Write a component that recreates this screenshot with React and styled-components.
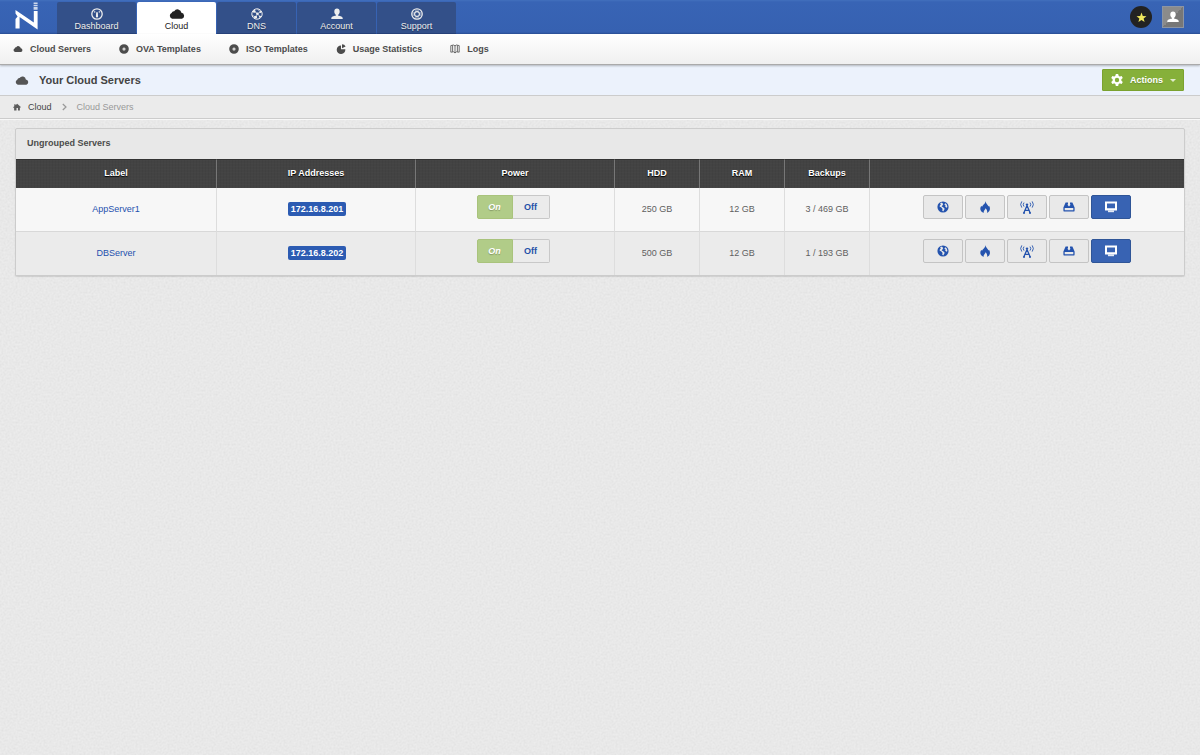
import React from 'react';
import styled, { createGlobalStyle, css } from 'styled-components';

const grain = `url("data:image/svg+xml,%3Csvg xmlns='http://www.w3.org/2000/svg' width='240' height='240'%3E%3Cfilter id='n' x='0' y='0' width='100%25' height='100%25'%3E%3CfeTurbulence type='fractalNoise' baseFrequency='0.5' numOctaves='3' stitchTiles='stitch'/%3E%3CfeColorMatrix values='1 0 0 0 0 1 0 0 0 0 1 0 0 0 0 0 0 0 0 1'/%3E%3C/filter%3E%3Crect width='240' height='240' filter='url(%23n)' opacity='0.09'/%3E%3C/svg%3E")`;

const weave = `repeating-linear-gradient(90deg, rgba(0, 0, 0, 0.04) 0 1px, transparent 1px 3px),
  repeating-linear-gradient(0deg, rgba(255, 255, 255, 0.01) 0 1px, transparent 1px 3px)`;

const GlobalStyle = createGlobalStyle`
  *, *::before, *::after {
    box-sizing: border-box;
  }

  body {
    margin: 0;
    min-height: 100vh;
    background: #ececec ${grain};
    color: #444;
    font: 9px/12px "Liberation Sans", Arial, sans-serif;
  }

  a {
    text-decoration: none;
  }

  button {
    margin: 0;
    padding: 0;
    font: inherit;
    cursor: pointer;
  }

  svg {
    display: block;
    flex: none;
  }
`;

const TopBar = styled.header`
  display: flex;
  align-items: stretch;
  height: 34px;
  padding-right: 16px;
  background: linear-gradient(#4270bd 0, #3864b5 2px, #3661b1 32px, #2a5096 100%);
`;

const Logo = styled.a`
  width: 57px;
  padding: 2px 0 0 15px;
`;

const Tabs = styled.nav`
  display: flex;
  gap: 1px;
  padding-top: 2px;
`;

const Tab = styled.a`
  display: flex;
  flex-direction: column;
  align-items: center;
  width: 79px;
  padding-top: 5px;
  border-radius: 2px 2px 0 0;
  background: #335089;
  box-shadow: inset 0 -1px #27437b;
  color: #eee;
  text-shadow: 0 1px 1px rgba(0, 0, 0, 0.4);

  ${props =>
    props.$active &&
    css`
      background: #fff;
      box-shadow: none;
      color: #222;
      text-shadow: none;
    `}
`;

const TabIcon = styled.span`
  display: flex;
  align-items: center;
  justify-content: center;
  height: 13px;
`;

const UserArea = styled.div`
  display: flex;
  align-items: center;
  gap: 10px;
  margin-left: auto;
`;

const StarButton = styled.button`
  display: flex;
  align-items: center;
  justify-content: center;
  width: 22px;
  height: 22px;
  border: 0;
  border-radius: 50%;
  background: #222;
  color: #f0e85e;
`;

const AvatarButton = styled.button`
  display: flex;
  align-items: center;
  justify-content: center;
  width: 22px;
  height: 22px;
  border: 1px solid #8d95a3;
  background: linear-gradient(135deg, #8b8b8b 50%, #777 50%);
  color: #fff;
`;

const SubNav = styled.nav`
  display: flex;
  align-items: center;
  gap: 28px;
  height: 31px;
  padding: 0 13px;
  border-bottom: 1px solid #aaa;
  background: linear-gradient(#fff, #f0f0f0);
  box-shadow: 0 1px 2px rgba(0, 0, 0, 0.25);
  position: relative;
`;

const SubLink = styled.a`
  display: flex;
  align-items: center;
  gap: 7px;
  color: #4c4c4c;
  font-weight: bold;
`;

const TitleBar = styled.div`
  display: flex;
  align-items: center;
  gap: 10px;
  height: 31px;
  padding: 0 16px 0 15px;
  border-bottom: 1px solid #ccc;
  background: #ecf2fc;
  color: #555;
`;

const Title = styled.h1`
  margin: 0;
  color: #444;
  font-size: 11px;
  line-height: 14px;
`;

const ActionsButton = styled.button`
  display: flex;
  align-items: center;
  gap: 7px;
  height: 22px;
  margin-left: auto;
  padding: 0 7px 0 8px;
  border: 1px solid #7ba22f;
  border-radius: 1px;
  background: #86b03a;
  color: #fff;
  font-weight: bold;
  text-shadow: 0 1px 1px rgba(0, 0, 0, 0.2);
`;

const Breadcrumbs = styled.nav`
  display: flex;
  align-items: center;
  gap: 10px;
  height: 23px;
  padding: 0 13px;
  border-bottom: 1px solid #ccc;
  background: #ebebeb;
  box-shadow: 0 1px #f8f8f8;
  color: #999;
`;

const Crumb = styled.a`
  display: flex;
  align-items: center;
  gap: 7px;
  color: #444;
`;

const Panel = styled.section`
  margin: 9px 15px;
  border: 1px solid #ccc;
  border-radius: 2px;
  background: #e8e8e8;
  box-shadow: 0 1px 1px rgba(0, 0, 0, 0.12);
`;

const PanelTitle = styled.h2`
  margin: 0;
  padding: 8px 11px 10px;
  color: #4c4c4c;
  font-size: 9px;
  line-height: 12px;
`;

const Table = styled.table`
  width: 100%;
  table-layout: fixed;
  border-spacing: 0;
`;

const columnWidths = {
  label: '201px',
  wide: '199px',
  narrow: '85px',
  rest: 'auto',
};

const Col = styled.col`
  width: ${props => columnWidths[props.$size]};
`;

const HeadCell = styled.th`
  height: 29px;
  padding: 0 0 2px;
  border-top: 1px solid #333;
  border-right: 1px solid #777;
  background: ${weave}, #434343;
  color: #fff;
  text-shadow: 0 1px 1px #000;

  &:last-child {
    border-right: 0;
  }
`;

const Row = styled.tr`
  background: #f7f7f7;

  &:nth-child(even) {
    background: #ebebeb;
  }
`;

const Cell = styled.td`
  height: 44px;
  padding: 0 0 2px;
  border-right: 1px solid #ddd;
  border-bottom: 1px solid #d8d8d8;
  color: #606060;
  text-align: center;

  &:last-child {
    border-right: 0;
  }

  tr:last-child > & {
    height: 43px;
    border-bottom: 0;
  }
`;

const ControlCell = styled(Cell)`
  padding-bottom: 5px;
`;

const PowerCell = styled(ControlCell)`
  padding-right: 4px;
`;

const ServerLink = styled.a`
  color: #2450ae;
`;

const IpBadge = styled.span`
  display: inline-block;
  margin-left: 2px;
  padding: 1px 3px;
  border-radius: 2px;
  background: #2c5bb2;
  color: #fff;
  font-weight: bold;
`;

const Switch = styled.div`
  display: inline-flex;
  vertical-align: middle;
`;

const SwitchButton = styled.button`
  width: 37px;
  height: 24px;
  border: 1px solid #c8c8c8;
  border-left: 0;
  border-radius: 0 2px 2px 0;
  background: #ebebeb;
  color: #2450a8;
  font-weight: bold;

  ${props =>
    props.$on &&
    css`
      width: 36px;
      border: 1px solid #a9c37c;
      border-radius: 2px 0 0 2px;
      background: #b1cc88;
      color: #fff;
      font-style: italic;
      text-shadow: 0 1px 1px rgba(0, 0, 0, 0.25);
    `}
`;

const Tools = styled.div`
  display: flex;
  justify-content: center;
  gap: 2px;
`;

const ToolButton = styled.button`
  display: flex;
  align-items: center;
  justify-content: center;
  width: 40px;
  height: 24px;
  border: 1px solid ${props => (props.$primary ? '#2f5597' : '#c4c4c4')};
  border-radius: 2px;
  background: ${props => (props.$primary ? '#3863b3' : '#e9e9e9')};
  color: ${props => (props.$primary ? '#fff' : '#2453ae')};
`;

const icons = {
  cloud: {
    box: '0 0 16 10',
    body: <path d="M3.2 9.800A3.100 3.100 0 0 1 2.600 4 2.500 2.500 0 0 1 5.200 2.200 3.900 3.900 0 0 1 12.400 3.800 3.100 3.100 0 0 1 13 9.800z" />,
  },
  gauge: {
    box: '0 0 12 12',
    body: (
      <>
        <circle cx="6" cy="6" r="5.200" fill="none" stroke="currentColor" strokeWidth="1.300" />
        <path d="M5.200 4.200h1.600l.3 4.200a1.100 1.100 0 0 1-2.200 0zM2.800 3.900l1-.8.8 1-1 .7zM9.200 3.900l-1-.8-.8 1 1 .7z" />
      </>
    ),
  },
  network: {
    box: '0 0 12 12',
    body: (
      <>
        <circle cx="6" cy="6" r="5.200" fill="none" stroke="currentColor" strokeWidth="1" />
        <path
          d="M3 3.200 6.400 5.600 9.600 4M6.400 5.600 5 9.400M6.400 5.600 9 8.600M6.500 1.200 9.600 4M1.400 7.400 5 9.400"
          fill="none"
          stroke="currentColor"
          strokeWidth=".7"
        />
        <circle cx="3.200" cy="3.400" r="1.400" />
        <circle cx="6.400" cy="5.700" r="1.300" />
        <circle cx="9.500" cy="4" r="1" />
        <circle cx="4.600" cy="9.200" r="1.400" />
        <circle cx="9" cy="8.800" r="1.100" />
      </>
    ),
  },
  person: {
    box: '0 0 12 12',
    body: (
      <path d="M6 .5c1.700 0 2.700 1.200 2.700 2.900C8.700 5 7.900 6.300 7 6.800v.8c2.800.4 4.700 1.300 4.700 2.500v1H.3v-1C.3 8.900 2.200 8 5 7.600v-.8C4.100 6.300 3.300 5 3.300 3.400 3.300 1.700 4.300.5 6 .5z" />
    ),
  },
  lifebuoy: {
    box: '0 0 12 12',
    body: (
      <g fill="none" stroke="currentColor">
        <circle cx="6" cy="6" r="5.300" strokeWidth="1.100" />
        <circle cx="6" cy="6" r="2.400" strokeWidth="1.100" />
        <path d="M5 .8v2.800M7 .8v2.800M5 8.400v2.800M7 8.400v2.800M.8 5h2.800M.8 7h2.800M8.400 5h2.800M8.400 7h2.800" strokeWidth=".7" />
      </g>
    ),
  },
  disc: {
    box: '0 0 10 10',
    body: (
      <>
        <path
          fillRule="evenodd"
          d="M5 .2a4.800 4.800 0 1 1 0 9.600A4.800 4.800 0 0 1 5 .2zM5 3.500a1.500 1.500 0 1 0 0 3 1.500 1.500 0 0 0 0-3z"
        />
        <circle cx="5" cy="5" r=".7" opacity=".6" />
      </>
    ),
  },
  pie: {
    box: '0 0 10 10',
    body: (
      <>
        <path d="M5 1.400V5.200H9.300A4.300 4.300 0 1 1 5 1.400z" />
        <path d="M6 .2A4 4 0 0 1 9.600 2.600L6 4.200z" />
      </>
    ),
  },
  book: {
    box: '0 0 10 10',
    body: (
      <path
        d="M.8 1.600 3.600 1 5 1.900 6.400 1 9.200 1.600V8.200L6.400 7.800 5 9 3.600 7.800.8 8.200zM5 1.900V9M2.600 1.400v6.400M7.400 1.400v6.400"
        fill="none"
        stroke="currentColor"
        strokeWidth=".8"
      />
    ),
  },
  home: {
    box: '0 0 10 10',
    body: <path d="M5.200 1 9.800 5 9 6 8.600 5.700V9.400H6.200V6.400H4.400V9.400H1.400V5.900L1 6.200.2 5.400 1.600 4V1.600H3.200V2.700z" opacity=".85" />,
  },
  chevron: {
    box: '0 0 5 8',
    body: <path d="M.8 1 4 4 .8 7" fill="none" stroke="currentColor" strokeWidth="1.200" />,
  },
  gear: {
    box: '0 0 12 12',
    body: (
      <>
        <circle cx="6" cy="6" r="3.300" fill="none" stroke="currentColor" strokeWidth="2.200" />
        <path d="M4.800 0h2.400l.4 2.200H4.400zM4.800 12h2.400l.4-2.200H4.400zM.2 4 1.400 1.900 3.600 2.700 2 5.400zM11.800 4 10.600 1.900 8.400 2.700 10 5.400zM.2 8l1.200 2.100 2.200-.8L2 6.600zM11.800 8l-1.200 2.100-2.200-.8L10 6.600z" />
      </>
    ),
  },
  caret: {
    box: '0 0 6 3',
    body: <path d="M0 0h6L3 3z" opacity=".75" />,
  },
  star: {
    box: '0 0 12 12',
    body: <path d="M6 .6 7.400 4.400 11.400 4.600 8.300 7.100 9.400 11 6 8.800 2.600 11 3.700 7.100.6 4.600 4.600 4.400z" />,
  },
  globe: {
    box: '0 0 12 12',
    body: (
      <path
        fillRule="evenodd"
        d="M6 .4a5.600 5.600 0 1 1 0 11.200A5.600 5.600 0 0 1 6 .4zM4.800 1.600 3 2.600 3.900 3.400 2.800 4.400 2.600 5.600 4.400 6.400 5.600 8 5.200 9.400 6.200 10.400 7.400 8.600 7.600 7.400 5.800 6 4.600 5.400 5.600 4.200 6.200 3zM8.200 2.200 7.400 3.400 8.600 4.400 8.200 5.600 9.400 6.800 10.400 6 10 4.200 9.400 3z"
      />
    ),
  },
  flame: {
    box: '0 0 12 12',
    body: (
      <path d="M6.200 0C6.600 2.400 9 3.600 9.400 5.400L10 4.800C11.800 7.600 11 10.600 8.200 11.900 8.400 10 7.800 8.400 6.600 7.200 6.200 8.800 4.400 9.600 4.600 11.900 1.400 10.600.4 7.600 2.200 5L3.200 5.800C3.600 3.800 6.600 3 6.200 0z" />
    ),
  },
  antenna: {
    box: '0 0 14 14',
    body: (
      <>
        <path
          d="M7 5.400 3.800 13M7 5.400 10.200 13M5 10.300H9M3 13h2M9 13h2"
          fill="none"
          stroke="currentColor"
          strokeWidth="1.300"
        />
        <circle cx="7" cy="4.600" r="1.200" />
        <path
          d="M4 2.600a3.200 3.200 0 0 0 0 4M10 2.600a3.200 3.200 0 0 1 0 4M1.800 1.400a5.200 5.200 0 0 0 0 6.200M12.200 1.400a5.200 5.200 0 0 1 0 6.200"
          fill="none"
          stroke="currentColor"
          strokeWidth=".9"
        />
      </>
    ),
  },
  drive: {
    box: '0 0 12 12',
    body: (
      <path
        fillRule="evenodd"
        d="M2.600 1.400H5V3.600H4.200L6 5.600 7.800 3.600H7V1.400H9.400L11.600 6.400V9.400Q11.600 10.600 10.400 10.600H1.600Q.4 10.600.4 9.400V6.400zM1.700 7V9.200H10.300V7z"
      />
    ),
  },
  monitor: {
    box: '0 0 12 12',
    body: (
      <>
        <path fillRule="evenodd" d="M0 .6H12V9.400H0zM2 2.600V7.200H10V2.600z" />
        <path d="M3 9.400H9V11.200H3z" opacity=".85" />
      </>
    ),
  },
};

const Icon = ({ name, width, height }) => (
  <svg width={width} height={height || width} viewBox={icons[name].box} fill="currentColor" aria-hidden="true">
    {icons[name].body}
  </svg>
);

const LogoMark = () => (
  <svg width="24" height="28" viewBox="0 0 24 28" fill="#fff" aria-hidden="true">
    <path d="M.5 8 18.800 20.500V9H22.600V27.500L4.600 15V26.500H.5V17L2.600 14.500.5 11.500z" />
    <path d="M18.600.5h4v1.500h-4zM18.600 2.800h4v1.500h-4zM18.600 5h4v2.800h-4z" opacity=".75" />
  </svg>
);

const tabs = [
  { label: 'Dashboard', icon: 'gauge' },
  { label: 'Cloud', icon: 'cloud', active: true },
  { label: 'DNS', icon: 'network' },
  { label: 'Account', icon: 'person' },
  { label: 'Support', icon: 'lifebuoy' },
];

const subLinks = [
  { label: 'Cloud Servers', icon: 'cloud' },
  { label: 'OVA Templates', icon: 'disc' },
  { label: 'ISO Templates', icon: 'disc' },
  { label: 'Usage Statistics', icon: 'pie' },
  { label: 'Logs', icon: 'book' },
];

const columns = [
  { label: 'Label', size: 'label' },
  { label: 'IP Addresses', size: 'wide' },
  { label: 'Power', size: 'wide' },
  { label: 'HDD', size: 'narrow' },
  { label: 'RAM', size: 'narrow' },
  { label: 'Backups', size: 'narrow' },
  { label: '', size: 'rest' },
];

const servers = [
  { name: 'AppServer1', ip: '172.16.8.201', hdd: '250 GB', ram: '12 GB', backups: '3 / 469 GB' },
  { name: 'DBServer', ip: '172.16.8.202', hdd: '500 GB', ram: '12 GB', backups: '1 / 193 GB' },
];

const tools = [
  { icon: 'globe', label: 'Network', size: 12 },
  { icon: 'flame', label: 'Firewall', size: 12 },
  { icon: 'antenna', label: 'Monitoring', size: 14 },
  { icon: 'drive', label: 'Backups', size: 12 },
  { icon: 'monitor', label: 'Console', size: 12, primary: true },
];

const ServerRow = ({ server }) => (
  <Row>
    <Cell>
      <ServerLink href="#server">{server.name}</ServerLink>
    </Cell>
    <Cell>
      <IpBadge>{server.ip}</IpBadge>
    </Cell>
    <PowerCell>
      <Switch role="group" aria-label={`Power for ${server.name}`}>
        <SwitchButton type="button" $on aria-pressed="true">
          On
        </SwitchButton>
        <SwitchButton type="button" aria-pressed="false">
          Off
        </SwitchButton>
      </Switch>
    </PowerCell>
    <Cell>{server.hdd}</Cell>
    <Cell>{server.ram}</Cell>
    <Cell>{server.backups}</Cell>
    <ControlCell>
      <Tools>
        {tools.map(tool => (
          <ToolButton key={tool.icon} type="button" aria-label={tool.label} $primary={tool.primary}>
            <Icon name={tool.icon} width={tool.size} />
          </ToolButton>
        ))}
      </Tools>
    </ControlCell>
  </Row>
);

const App = () => (
  <>
    <GlobalStyle />
    <TopBar>
      <Logo href="#home" aria-label="Home">
        <LogoMark />
      </Logo>
      <Tabs>
        {tabs.map(tab => (
          <Tab key={tab.label} href="#tab" $active={tab.active}>
            <TabIcon>
              <Icon name={tab.icon} width={tab.active ? 16 : 12} height={tab.active ? 10 : 12} />
            </TabIcon>
            {tab.label}
          </Tab>
        ))}
      </Tabs>
      <UserArea>
        <StarButton type="button" aria-label="Favourites">
          <Icon name="star" width={11} />
        </StarButton>
        <AvatarButton type="button" aria-label="Your account">
          <Icon name="person" width={12} />
        </AvatarButton>
      </UserArea>
    </TopBar>
    <SubNav>
      {subLinks.map(link => (
        <SubLink key={link.label} href="#section">
          <Icon name={link.icon} width={10} />
          {link.label}
        </SubLink>
      ))}
    </SubNav>
    <main>
      <TitleBar>
        <Icon name="cloud" width={14} height={9} />
        <Title>Your Cloud Servers</Title>
        <ActionsButton type="button" aria-haspopup="menu">
          <Icon name="gear" width={12} />
          Actions
          <Icon name="caret" width={6} height={3} />
        </ActionsButton>
      </TitleBar>
      <Breadcrumbs aria-label="Breadcrumb">
        <Crumb href="#cloud">
          <Icon name="home" width={8} />
          Cloud
        </Crumb>
        <Icon name="chevron" width={5} height={8} />
        <span>Cloud Servers</span>
      </Breadcrumbs>
      <Panel>
        <PanelTitle>Ungrouped Servers</PanelTitle>
        <Table>
          <colgroup>
            {columns.map(column => (
              <Col key={column.label} $size={column.size} />
            ))}
          </colgroup>
          <thead>
            <tr>
              {columns.map(column => (
                <HeadCell key={column.label} scope="col">
                  {column.label}
                </HeadCell>
              ))}
            </tr>
          </thead>
          <tbody>
            {servers.map(server => (
              <ServerRow key={server.name} server={server} />
            ))}
          </tbody>
        </Table>
      </Panel>
    </main>
  </>
);

export default App;
